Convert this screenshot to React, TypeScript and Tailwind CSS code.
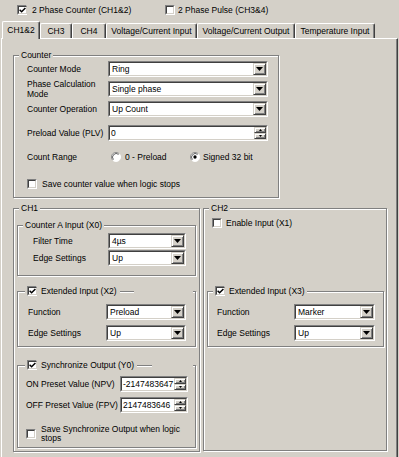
import React from "react";

const Check = ({ checked }: { checked?: boolean }) => (
  <span className="inline-flex w-[10px] h-[10px] shrink-0 border border-t-[#808080] border-l-[#808080] border-r-white border-b-white">
    <span className="flex-1 flex items-center justify-center bg-white border border-t-[#404040] border-l-[#404040] border-r-[#d4d0c8] border-b-[#d4d0c8]">
      {checked && (
        <svg width="7" height="7" viewBox="0 0 7 7" className="shrink-0 overflow-visible">
          <path d="M0.6 2.8 L2.6 4.8 L6.4 1" stroke="#000" strokeWidth="1.5" fill="none" />
        </svg>
      )}
    </span>
  </span>
);

const Radio = ({ on }: { on?: boolean }) => (
  <svg width="10" height="10" viewBox="0 0 12 12" className="shrink-0">
    <circle cx="6" cy="6" r="5.5" fill="#fff" />
    <path d="M2.1 9.9 A5.5 5.5 0 0 1 9.9 2.1" stroke="#808080" fill="none" />
    <path d="M2.9 9.1 A4.4 4.4 0 0 1 9.1 2.9" stroke="#404040" fill="none" />
    <path d="M9.9 2.1 A5.5 5.5 0 0 1 2.1 9.9" stroke="#fff" fill="none" />
    {on && <circle cx="6" cy="6" r="2" fill="#000" />}
  </svg>
);

const Down = () => (
  <svg width="7" height="4" viewBox="0 0 7 4" className="shrink-0">
    <polygon points="0,0 7,0 3.5,4" fill="#000" />
  </svg>
);

const Btn = ({ children, className = "" }: { children?: React.ReactNode; className?: string }) => (
  <span
    className={
      "flex items-center justify-center bg-[#d4d0c8] border border-t-[#d4d0c8] border-l-[#d4d0c8] border-r-[#404040] border-b-[#404040] shadow-[inset_1px_1px_0_#fff,inset_-1px_-1px_0_#808080] " +
      className
    }
  >
    {children}
  </span>
);

const Field = ({ w, children }: { w: string; children: React.ReactNode }) => (
  <div className={"flex h-[16px] shrink-0 border border-t-[#808080] border-l-[#808080] border-r-white border-b-white " + w}>
    <div className="flex flex-1 min-w-0 bg-white border border-t-[#404040] border-l-[#404040] border-r-[#d4d0c8] border-b-[#d4d0c8]">
      {children}
    </div>
  </div>
);

const Combo = ({ w, text }: { w: string; text: string }) => (
  <Field w={w}>
    <span className="flex-1 flex items-center pl-[2px] overflow-hidden whitespace-nowrap">{text}</span>
    <Btn className="w-[13px]">
      <Down />
    </Btn>
  </Field>
);

const Spin = ({ w, text }: { w: string; text: string }) => (
  <Field w={w}>
    <span className="flex-1 flex items-center pl-[1px] overflow-hidden whitespace-nowrap">{text}</span>
    <span className="flex flex-col w-[12px]">
      <Btn className="flex-1">
        <svg width="3" height="2" viewBox="0 0 3 2">
          <polygon points="1.5,0 3,2 0,2" fill="#000" />
        </svg>
      </Btn>
      <Btn className="flex-1">
        <svg width="3" height="2" viewBox="0 0 3 2">
          <polygon points="0,0 3,0 1.5,2" fill="#000" />
        </svg>
      </Btn>
    </span>
  </Field>
);

const Group = ({
  title,
  className = "",
  legend = "ml-[5px]",
  children,
}: {
  title: React.ReactNode;
  className?: string;
  legend?: string;
  children?: React.ReactNode;
}) => (
  <fieldset className={"border border-[#808080] shadow-[inset_1px_1px_0_#fff,1px_1px_0_#fff] shrink-0 " + className}>
    <legend className={"px-[2px] bg-[#d4d0c8] leading-[10px] h-[10px] " + legend}>{title}</legend>
    {children}
  </fieldset>
);

const CheckTitle = ({ text, checked, seg }: { text: string; checked?: boolean; seg?: string }) => (
  <span className="flex items-center gap-[4px] h-[10px]">
    <Check checked={checked} />
    <span className="whitespace-nowrap">{text}</span>
    {seg && <span className={"h-[2px] ml-[-1px] mt-[1px] border-t border-t-[#808080] border-b border-b-white shrink-0 " + seg} />}
  </span>
);

const Row = ({
  label,
  labelW,
  className = "",
  children,
}: {
  label: React.ReactNode;
  labelW: string;
  className?: string;
  children: React.ReactNode;
}) => (
  <div className={"flex items-center h-[16px] " + className}>
    <span className={"shrink-0 " + labelW}>{label}</span>
    {children}
  </div>
);

const Tab = ({ w, selected, children }: { w: string; selected?: boolean; children: React.ReactNode }) => (
  <div
    className={
      "flex items-center justify-center shrink-0 whitespace-nowrap bg-[#d4d0c8] border-l border-t border-r border-l-white border-t-white border-r-[#404040] shadow-[inset_-1px_0_0_#808080] rounded-t-[2px] " +
      w +
      (selected ? " h-[18px] -mb-[1px] relative z-10 pb-[1px]" : " h-[15px]")
    }
  >
    {children}
  </div>
);

export default function App() {
  return (
    <div className="w-[399px] h-[457px] bg-[#d4d0c8] overflow-hidden text-black text-[8.5px] leading-[10px] font-['Liberation_Sans',Arial,sans-serif]">
      <div className="flex items-center h-[10px] mt-[5px] pl-[17px]">
        <div className="flex items-center w-[148px] gap-[5px]">
          <Check checked />
          <span>2 Phase Counter (CH1&amp;2)</span>
        </div>
        <div className="flex items-center gap-[3px]">
          <Check />
          <span>2 Phase Pulse (CH3&amp;4)</span>
        </div>
      </div>

      <div className="flex items-end h-[17px] mt-[6px] pl-[2px]">
        <Tab w="w-[38px]" selected>
          CH1&amp;2
        </Tab>
        <Tab w="w-[32px]">CH3</Tab>
        <Tab w="w-[34px]">CH4</Tab>
        <Tab w="w-[91px]">Voltage/Current Input</Tab>
        <Tab w="w-[98px]">Voltage/Current Output</Tab>
        <Tab w="w-[80px]">Temperature Input</Tab>
      </div>

      <div className="ml-[1px] w-[397px] h-[419px] border-l border-t border-r border-l-white border-t-white border-r-[#404040] shadow-[inset_-1px_0_0_#808080] flex flex-col">
        <Group title="Counter" className="ml-[11px] mt-[11px] w-[266px] h-[148px]">
          <div className="flex flex-col pl-[13px]">
            <Row className="mt-[1px]" labelW="w-[81px]" label="Counter Mode">
              <Combo w="w-[160px]" text="Ring" />
            </Row>
            <Row
              className="mt-[4px]"
              labelW="w-[81px]"
              label={
                <span className="block leading-[10px]">
                  Phase Calculation
                  <br />
                  Mode
                </span>
              }
            >
              <Combo w="w-[160px]" text="Single phase" />
            </Row>
            <Row className="mt-[4px]" labelW="w-[81px]" label="Counter Operation">
              <Combo w="w-[160px]" text="Up Count" />
            </Row>
            <Row className="mt-[8px]" labelW="w-[81px]" label="Preload Value (PLV)">
              <Spin w="w-[160px]" text="0" />
            </Row>
            <div className="flex items-center h-[10px] mt-[11px]">
              <span className="w-[84px] shrink-0">Count Range</span>
              <div className="flex items-center gap-[4px] w-[79px] shrink-0">
                <Radio />
                <span>0 - Preload</span>
              </div>
              <div className="flex items-center gap-[3px]">
                <Radio on />
                <span>Signed 32 bit</span>
              </div>
            </div>
            <div className="flex items-center h-[10px] mt-[17px] gap-[5px]">
              <Check />
              <span>Save counter value when logic stops</span>
            </div>
          </div>
        </Group>

        <div className="flex mt-[5px] ml-[11px]">
          <Group title="CH1" className="w-[187px] h-[249px]">
            <div className="flex flex-col pl-[3px]">
              <Group title="Counter A Input (X0)" className="mt-[7px] w-[179px] h-[56px]">
                <div className="flex flex-col pl-[15px]">
                  <Row className="mt-[3px]" labelW="w-[75px]" label="Filter Time">
                    <Combo w="w-[78px]" text="4µs" />
                  </Row>
                  <Row className="mt-[1px]" labelW="w-[75px]" label="Edge Settings">
                    <Combo w="w-[78px]" text="Up" />
                  </Row>
                </div>
              </Group>
              <Group
                title={<CheckTitle checked text="Extended Input (X2)" seg="w-[14px]" />}
                legend="ml-[7px] w-[168px]"
                className="mt-[10px] w-[179px] h-[61px]"
              >
                <div className="flex flex-col pl-[10px]">
                  <Row className="mt-[8px]" labelW="w-[78px]" label="Function">
                    <Combo w="w-[80px]" text="Preload" />
                  </Row>
                  <Row className="mt-[5px]" labelW="w-[78px]" label="Edge Settings">
                    <Combo w="w-[80px]" text="Up" />
                  </Row>
                </div>
              </Group>
              <Group
                title={<CheckTitle checked text="Synchronize Output (Y0)" seg="w-[15px]" />}
                legend="ml-[7px] w-[168px]"
                className="mt-[13px] w-[179px] h-[88px]"
              >
                <div className="flex flex-col pl-[8px]">
                  <Row className="mt-[6px]" labelW="w-[94px]" label="ON Preset Value (NPV)">
                    <Spin w="w-[68px]" text="-2147483647" />
                  </Row>
                  <Row className="mt-[5px]" labelW="w-[94px]" label="OFF Preset Value (FPV)">
                    <Spin w="w-[68px]" text="2147483646" />
                  </Row>
                  <div className="flex items-center mt-[12px] gap-[5px]">
                    <Check />
                    <span className="leading-[9px]">
                      Save Synchronize Output when logic
                      <br />
                      stops
                    </span>
                  </div>
                </div>
              </Group>
            </div>
          </Group>

          <Group title="CH2" className="ml-[3px] w-[184px] h-[248px]">
            <div className="flex flex-col pl-[3px]">
              <div className="flex items-center h-[10px] mt-[5px] ml-[5px] gap-[4px]">
                <Check />
                <span>Enable Input (X1)</span>
              </div>
              <Group
                title={<CheckTitle checked text="Extended Input (X3)" />}
                className="mt-[58px] w-[177px] h-[61px]"
              >
                <div className="flex flex-col pl-[9px]">
                  <Row className="mt-[8px]" labelW="w-[77px]" label="Function">
                    <Combo w="w-[81px]" text="Marker" />
                  </Row>
                  <Row className="mt-[5px]" labelW="w-[77px]" label="Edge Settings">
                    <Combo w="w-[81px]" text="Up" />
                  </Row>
                </div>
              </Group>
            </div>
          </Group>
        </div>
      </div>
    </div>
  );
}
